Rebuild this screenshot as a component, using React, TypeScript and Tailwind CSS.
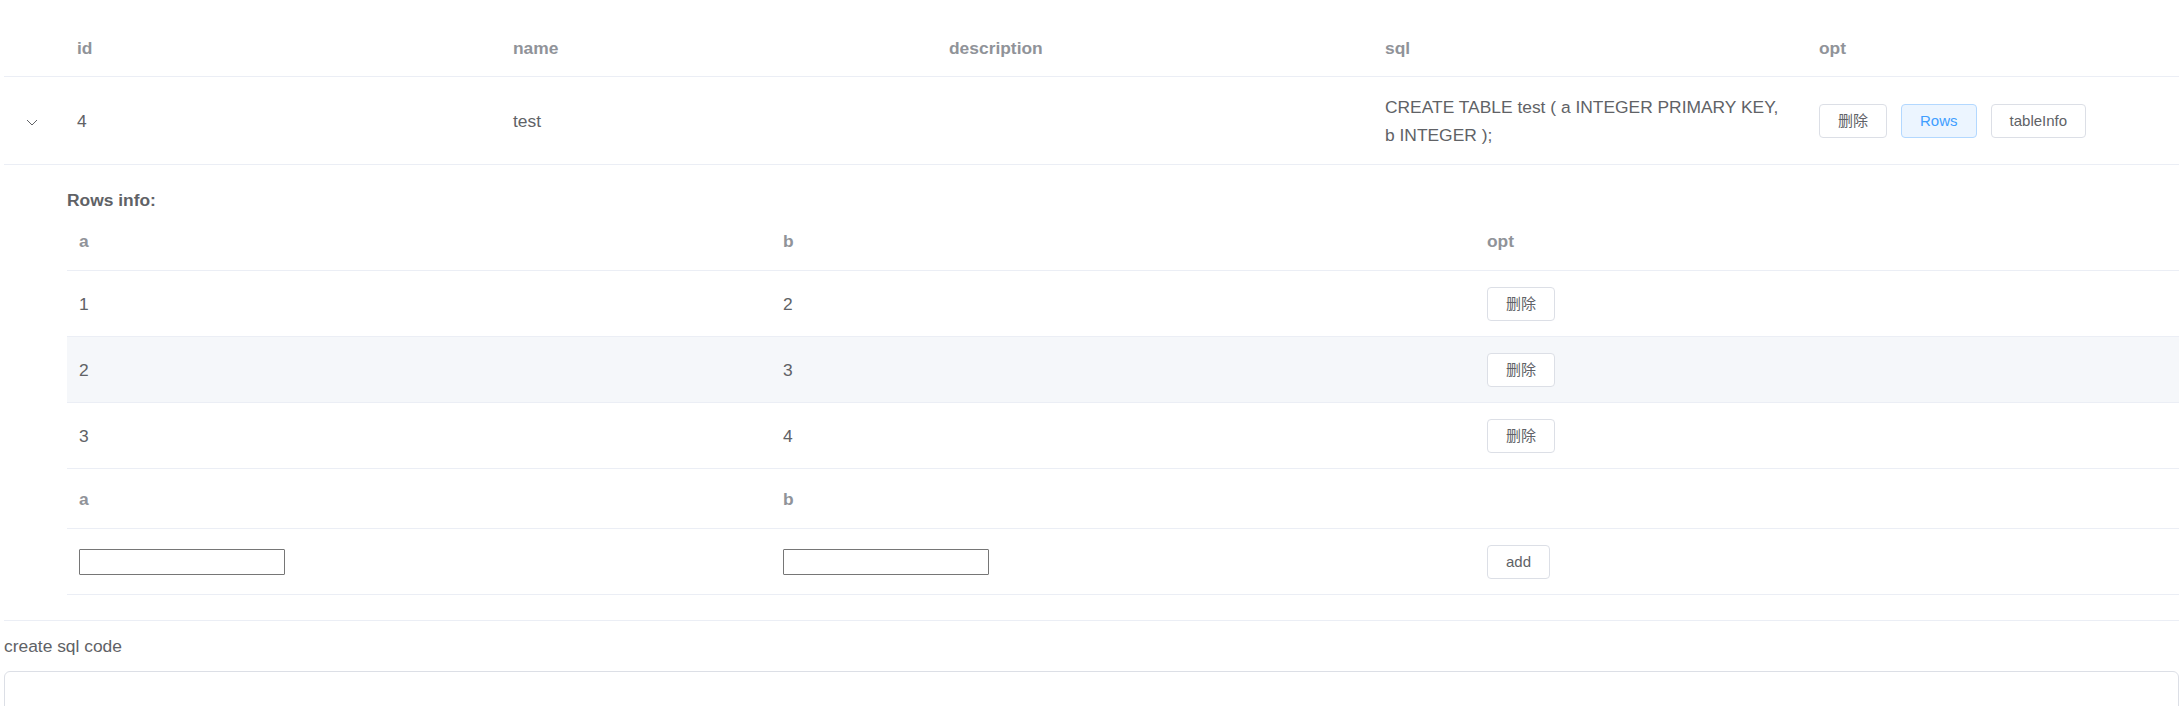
import React from "react";

const font = "font-['Liberation_Sans','Noto_Sans_CJK_SC',sans-serif]";

const Btn = ({ children, primary }: { children: React.ReactNode; primary?: boolean }) => (
  <button
    className={
      "h-[34px] px-[18px] rounded-[4px] border text-[15px] leading-none " +
      (primary
        ? "bg-[#ecf5ff] border-[#b3d8ff] text-[#409eff]"
        : "bg-white border-[#dcdfe6] text-[#606266]")
    }
  >
    {children}
  </button>
);

const rows = [
  { a: "1", b: "2" },
  { a: "2", b: "3" },
  { a: "3", b: "4" },
];

const outerCols = "grid grid-cols-[61px_436px_436px_436px_434px_1fr]";
const innerCols = "grid grid-cols-3";

export default function App() {
  return (
    <div className={`${font} bg-white min-h-screen pl-1 text-[17.4px] text-[#606266]`}>
      {/* main table */}
      <div>
        <div className={`${outerCols} h-[77px] border-b border-[#ebeef5] pt-[34px] font-bold text-[#909399] leading-[28px]`}>
          <div />
          {["id", "name", "description", "sql", "opt"].map((h) => (
            <div key={h} className="px-3">
              {h}
            </div>
          ))}
        </div>

        <div className={`${outerCols} h-[88px] border-b border-[#ebeef5] items-center leading-[28px]`}>
          <div className="pl-[22px] flex items-center">
            <svg width="12" height="12" viewBox="0 0 12 12" className="mt-[2px]">
              <polyline points="1,4 6,9 11,4" fill="none" stroke="#606266" strokeWidth="1" />
            </svg>
          </div>
          <div className="px-3">4</div>
          <div className="px-3">test</div>
          <div className="px-3" />
          <div className="px-3">
            <div className="max-w-[404px]">CREATE TABLE test ( a INTEGER PRIMARY KEY, b INTEGER );</div>
          </div>
          <div className="px-3 flex gap-[14px]">
            <Btn>删除</Btn>
            <Btn primary>Rows</Btn>
            <Btn>tableInfo</Btn>
          </div>
        </div>

        {/* expanded row */}
        <div className="border-b border-[#ebeef5] pl-[63px] pt-6 pb-[25px]">
          <div className="font-bold leading-[22px]">Rows info:</div>
          <div>
            <div className={`${innerCols} h-[60px] border-b border-[#ebeef5] items-center font-bold text-[#909399] leading-[22px]`}>
              <div className="px-3">a</div>
              <div className="px-3">b</div>
              <div className="px-3">opt</div>
            </div>
            {rows.map((r, i) => (
              <div
                key={i}
                className={`${innerCols} h-[66px] border-b border-[#ebeef5] items-center leading-[22px] ${i === 1 ? "bg-[#f5f7fa]" : ""}`}
              >
                <div className="px-3">{r.a}</div>
                <div className="px-3">{r.b}</div>
                <div className="px-3">
                  <Btn>删除</Btn>
                </div>
              </div>
            ))}
            <div className={`${innerCols} h-[60px] border-b border-[#ebeef5] items-center font-bold text-[#909399] leading-[22px]`}>
              <div className="px-3">a</div>
              <div className="px-3">b</div>
              <div className="px-3" />
            </div>
            <div className={`${innerCols} h-[66px] border-b border-[#ebeef5] items-center`}>
              <div className="px-3">
                <input className="block w-[206px] h-[26px] border border-[#767676] rounded-[1px] bg-white" />
              </div>
              <div className="px-3">
                <input className="block w-[206px] h-[26px] border border-[#767676] rounded-[1px] bg-white" />
              </div>
              <div className="px-3">
                <Btn>add</Btn>
              </div>
            </div>
          </div>
        </div>
      </div>

      <div className="mt-[14px] leading-[22px]">create sql code</div>
      <textarea className="block mt-[14px] w-full h-[120px] border border-[#dcdfe6] rounded-[6px] resize-none" />
    </div>
  );
}
